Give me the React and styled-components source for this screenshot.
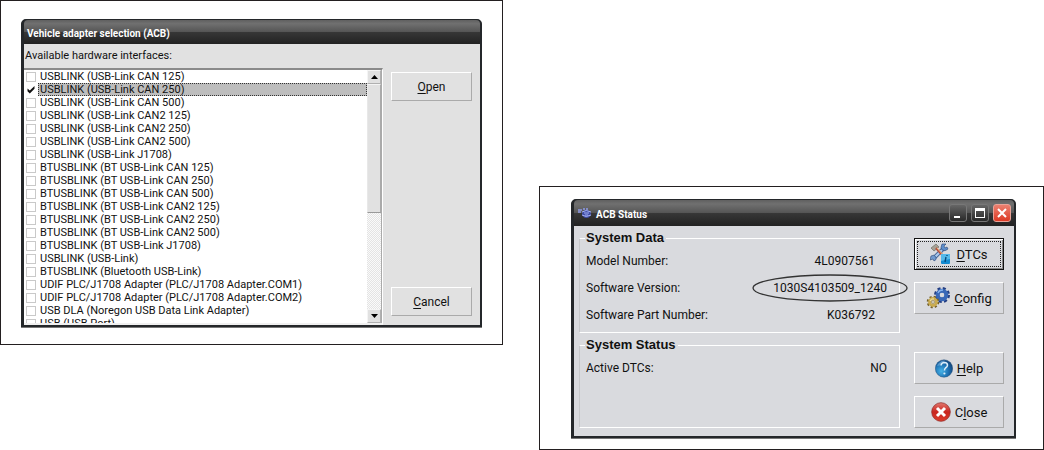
import { useRef, useState } from "react";
import styled, { createGlobalStyle } from "styled-components";

const INTERFACES = [
    "USBLINK (USB-Link CAN 125)",
    "USBLINK (USB-Link CAN 250)",
    "USBLINK (USB-Link CAN 500)",
    "USBLINK (USB-Link CAN2 125)",
    "USBLINK (USB-Link CAN2 250)",
    "USBLINK (USB-Link CAN2 500)",
    "USBLINK (USB-Link J1708)",
    "BTUSBLINK (BT USB-Link CAN 125)",
    "BTUSBLINK (BT USB-Link CAN 250)",
    "BTUSBLINK (BT USB-Link CAN 500)",
    "BTUSBLINK (BT USB-Link CAN2 125)",
    "BTUSBLINK (BT USB-Link CAN2 250)",
    "BTUSBLINK (BT USB-Link CAN2 500)",
    "BTUSBLINK (BT USB-Link J1708)",
    "USBLINK (USB-Link)",
    "BTUSBLINK (Bluetooth USB-Link)",
    "UDIF PLC/J1708 Adapter (PLC/J1708 Adapter.COM1)",
    "UDIF PLC/J1708 Adapter (PLC/J1708 Adapter.COM2)",
    "USB DLA (Noregon USB Data Link Adapter)",
    "USB (USB Port)",
]

const ROW_HEIGHT = 13

export default function App() {
    return (
        <>
            <GlobalStyle />
            <Page>
                <Figure $align="start" $padding="18px 20px 17px 20px">
                    <AdapterDialog />
                </Figure>
                <Figure $align="end" $padding="12px 27px 11px 31px">
                    <StatusDialog />
                </Figure>
            </Page>
        </>
    )
}

function AdapterDialog() {
    const [selected, setSelected] = useState(1)
    const listRef = useRef(null)

    function scroll(direction) {
        listRef.current.scrollBy(0, direction * ROW_HEIGHT)
    }

    return (
        <Dialog>
            <TitleBar $height={24}>
                <Title>Vehicle adapter selection (ACB)</Title>
            </TitleBar>
            <AdapterBody>
                <ListLabel id="interfaces">Available hardware interfaces:</ListLabel>
                <AdapterContent>
                    <ListBox>
                        <List ref={listRef} aria-labelledby="interfaces">
                            {INTERFACES.map((name, i) => (
                                <Row key={name}>
                                    <Check
                                        id={`interface-${i}`}
                                        type="checkbox"
                                        checked={selected === i}
                                        onChange={() => setSelected(i)}
                                    />
                                    <RowLabel htmlFor={`interface-${i}`} $selected={selected === i}>
                                        {name}
                                    </RowLabel>
                                </Row>
                            ))}
                        </List>
                        <ScrollBar>
                            <ScrollButton aria-label="Scroll up" onClick={() => scroll(-1)}>
                                <svg width="7" height="4" viewBox="0 0 7 4"><path d="M0 4L3.5 0L7 4Z" /></svg>
                            </ScrollButton>
                            <Thumb />
                            <Track />
                            <ScrollButton aria-label="Scroll down" onClick={() => scroll(1)}>
                                <svg width="7" height="4" viewBox="0 0 7 4"><path d="M0 0L3.5 4L7 0Z" /></svg>
                            </ScrollButton>
                        </ScrollBar>
                    </ListBox>
                    <AdapterButtons>
                        <Button $size={12}><span><u>O</u>pen</span></Button>
                        <Button $size={12}><span><u>C</u>ancel</span></Button>
                    </AdapterButtons>
                </AdapterContent>
            </AdapterBody>
        </Dialog>
    )
}

function StatusDialog() {
    return (
        <Dialog>
            <TitleBar $height={26}>
                <AppIcon />
                <Title>ACB Status</Title>
                <WindowButtons>
                    <WindowButton aria-label="Minimize">
                        <svg width="16" height="16" viewBox="0 0 16 16"><path d="M4 11h6v2H4z" fill="#fff" /></svg>
                    </WindowButton>
                    <WindowButton aria-label="Maximize">
                        <svg width="16" height="16" viewBox="0 0 16 16">
                            <path d="M3 3h10v10H3zM4 6v6h8V6z" fill="#fff" fillRule="evenodd" />
                        </svg>
                    </WindowButton>
                    <WindowButton aria-label="Close window" $close>
                        <svg width="16" height="16" viewBox="0 0 16 16">
                            <path d="M4 4l8 8M12 4l-8 8" stroke="#fff" strokeWidth="2" />
                        </svg>
                    </WindowButton>
                </WindowButtons>
            </TitleBar>
            <StatusBody>
                <Groups>
                    <Group>
                        <Legend>System Data</Legend>
                        <Fields>
                            <Field>
                                <dt>Model Number:</dt>
                                <Value $inset>4L0907561</Value>
                            </Field>
                            <Field>
                                <dt>Software Version:</dt>
                                <Value>
                                    1030S4103509_1240
                                    <Ring viewBox="0 0 156 28" aria-hidden="true">
                                        <ellipse cx="78" cy="14" rx="77" ry="13" />
                                    </Ring>
                                </Value>
                            </Field>
                            <Field>
                                <dt>Software Part Number:</dt>
                                <Value $inset>K036792</Value>
                            </Field>
                        </Fields>
                    </Group>
                    <Group $grow>
                        <Legend>System Status</Legend>
                        <Fields>
                            <Field>
                                <dt>Active DTCs:</dt>
                                <Value>NO</Value>
                            </Field>
                        </Fields>
                    </Group>
                </Groups>
                <StatusButtons>
                    <ButtonPair>
                        <Button $size={13} $focused><ToolsIcon /><span><u>D</u>TCs</span></Button>
                        <Button $size={13}><GearsIcon /><span><u>C</u>onfig</span></Button>
                    </ButtonPair>
                    <ButtonPair>
                        <Button $size={13}><HelpIcon /><span><u>H</u>elp</span></Button>
                        <Button $size={13}><CloseIcon /><span>C<u>l</u>ose</span></Button>
                    </ButtonPair>
                </StatusButtons>
            </StatusBody>
        </Dialog>
    )
}

function AppIcon() {
    return (
        <svg width="15" height="11" viewBox="0 0 15 11" aria-hidden="true">
            <path d="M1 2h4M1 4h3M6 1h2M9 1h2" stroke="#8f9be8" strokeWidth="1.4" />
            <ellipse cx="9.5" cy="6" rx="4.5" ry="4" fill="#3f4da6" />
            <path d="M5 4q4-3 9 0M5 7q4 3 9 0M7 5h5M8 7h3" stroke="#a3b0f5" fill="none" />
        </svg>
    )
}

function ToolsIcon() {
    return (
        <svg width="22" height="22" viewBox="0 0 22 22" aria-hidden="true">
            <path d="M4 15L14 5" stroke="#3e5f92" strokeWidth="4" />
            <path d="M4 15L14 5" stroke="#a9c8ec" strokeWidth="2.2" />
            <path d="M12 1q-2 4 0 6q3 2 6-1l-1-2-2 1-1-2 2-2z" fill="#5f8fcc" stroke="#2d4876" strokeWidth=".6" />
            <path d="M1 13q3-2 5 1q1 3-2 4l-1-2-3 1z" fill="#719bd0" stroke="#2d4876" strokeWidth=".6" />
            <path d="M1 5l5-4 3 3-5 4z" fill="#a5a195" stroke="#66645d" strokeWidth=".6" />
            <path d="M6 5l8 9" stroke="#b84d3b" strokeWidth="2.2" />
            <path d="M7 5l7 8" stroke="#edbd83" />
            <rect x="11" y="11" width="9" height="10" rx="1" fill="#148bd1" />
            <path d="M11 11h9v5l-9 2z" fill="#54b9ea" />
            <path d="M16 14l-1 5M17 12v1" stroke="#064b7d" strokeWidth="1.4" />
        </svg>
    )
}

function GearsIcon() {
    return (
        <svg width="24" height="22" viewBox="0 0 24 22" aria-hidden="true">
            <circle cx="16" cy="8" r="6.5" fill="none" stroke="#243f83" strokeWidth="3" strokeDasharray="2.9 2.2" />
            <circle cx="16" cy="8" r="4.3" fill="none" stroke="#3968b7" strokeWidth="4" />
            <path d="M12 6q1-3 5-3" fill="none" stroke="#88b4ee" strokeWidth="1.3" />
            <circle cx="16" cy="8" r="2" fill="#d9dade" />
            <circle cx="7" cy="15" r="5" fill="none" stroke="#74602b" strokeWidth="2.6" strokeDasharray="2 1.93" />
            <circle cx="7" cy="15" r="3.4" fill="none" stroke="#c9ab50" strokeWidth="3" />
            <path d="M4 14q1-3 4-2" fill="none" stroke="#f6e4a1" />
            <circle cx="7" cy="15" r="1.5" fill="#ded9c6" stroke="#74602b" strokeWidth=".5" />
        </svg>
    )
}

function HelpIcon() {
    return (
        <svg width="18" height="19" viewBox="0 0 18 19" aria-hidden="true">
            <defs>
                <radialGradient id="help" cx=".35" cy=".65" r=".7">
                    <stop offset="0" stopColor="#46b3e8" />
                    <stop offset=".6" stopColor="#1c6fb1" />
                    <stop offset="1" stopColor="#14457b" />
                </radialGradient>
            </defs>
            <circle cx="9" cy="9.5" r="8.7" fill="url(#help)" stroke="#2c567f" strokeWidth=".5" />
            <path d="M2 7q3-6 8-5.5q-3 5-8 5.5z" fill="#70a9d7" opacity=".7" />
            <path d="M6 6.500q.5-3 3.500-3q3 .2 3 2.700q0 1.500-2 2.800q-1 .8-1 2.500" fill="none" stroke="#dceefa" strokeWidth="1.500" />
            <circle cx="9.400" cy="14.500" r="1.100" fill="#dceefa" />
        </svg>
    )
}

function CloseIcon() {
    return (
        <svg width="20" height="20" viewBox="0 0 20 20" aria-hidden="true">
            <defs>
                <linearGradient id="close" x2="0" y2="1">
                    <stop offset="0" stopColor="#e2776d" />
                    <stop offset=".5" stopColor="#c9251f" />
                    <stop offset="1" stopColor="#dc3e2d" />
                </linearGradient>
            </defs>
            <circle cx="10" cy="10" r="9.3" fill="url(#close)" stroke="#95312e" strokeWidth=".8" />
            <path d="M6 6l8 8M14 6l-8 8" stroke="#fff" strokeWidth="3" />
        </svg>
    )
}

const GlobalStyle = createGlobalStyle`
    * {
        box-sizing: border-box;
    }
    body {
        margin: 0;
        background-color: #fff;
        color: #111;
        font-family: Roboto, "Liberation Sans", sans-serif;
    }
`
const Page = styled.main`
    min-height: 100vh;
    display: grid;
    grid-template-columns: 503fr 505fr;
    gap: 36px;
`
const Figure = styled.section`
    align-self: ${({ $align }) => $align};
    padding: ${({ $padding }) => $padding};
    border: 1px solid #231f20;
`
const Dialog = styled.div`
    border: 1px solid #24272a;
    border-width: 1px 2px 2px 3px;
    border-radius: 5px 5px 0 0;
    background-color: #24272a;
    box-shadow: 0 1px 0 #777;
`
const TitleBar = styled.header`
    height: ${({ $height }) => $height}px;
    padding: 0 3px;
    border-radius: 4px 4px 0 0;
    background: linear-gradient(#606060, #707070 15%, #565656 48%, #363636 52%, #222 100%);
    display: flex;
    align-items: center;
    gap: 4px;
`
const Title = styled.h1`
    margin: 0;
    padding-top: 2px;
    color: #fff;
    font-size: 10px;
    font-weight: 700;
`
const AdapterBody = styled.div`
    padding: 4px 8px 0 0;
    background-color: #e1e1e1;
`
const ListLabel = styled.h2`
    margin: 0;
    padding-left: 1px;
    font-size: 11px;
    line-height: 16px;
    font-weight: 400;
`
const AdapterContent = styled.div`
    padding-top: 4px;
    display: flex;
    gap: 8px;
`
const ListBox = styled.div`
    flex: 1;
    height: 257px;
    display: flex;
    background-color: #fff;
    border-top: 2px solid #8a8a8a;
    border-bottom: 2px solid #f0f0f0;
    border-right: 1px solid #fff;
`
const List = styled.ul`
    flex: 1;
    margin: 0;
    padding: 0 0 0 2px;
    list-style: none;
    overflow: hidden;
`
const Row = styled.li`
    height: ${ROW_HEIGHT}px;
    display: flex;
    align-items: center;
    gap: 2px;
`
const Check = styled.input`
    appearance: none;
    width: 10px;
    height: 10px;
    margin: 0;
    border: 1px solid #c9c9c9;
    background-color: #fff;
    &:checked {
        border-color: #111;
        background-color: #111;
        clip-path: polygon(15% 40%, 38% 60%, 85% 15%, 85% 42%, 38% 90%, 15% 68%);
    }
`
const RowLabel = styled.label`
    flex: 1;
    padding-left: 1px;
    border: 1px dotted ${({ $selected }) => $selected ? "#333" : "transparent"};
    background-color: ${({ $selected }) => $selected ? "#bdbdbd" : "transparent"};
    font-size: 11px;
    line-height: 11px;
    white-space: nowrap;
`
const ScrollBar = styled.div`
    width: 15px;
    display: flex;
    flex-direction: column;
    border-right: 1px solid #aaa;
`
const ScrollButton = styled.button`
    height: 14px;
    padding: 0;
    border: 1px solid;
    border-color: #f4f4f4 #b0b0b0 #b0b0b0 #f4f4f4;
    background-color: #e1e1e1;
    display: flex;
    align-items: center;
    justify-content: center;
`
const Thumb = styled.div`
    flex: 4;
    border: 1px solid;
    border-color: #f4f4f4 #aaa #999 #e8e8e8;
    background-color: #e1e1e1;
`
const Track = styled.div`
    flex: 3;
    background: repeating-conic-gradient(#e4e4e4 0 25%, #fafafa 0 50%) 0 0 / 2px 2px;
`
const AdapterButtons = styled.div`
    width: 81px;
    padding: 4px 0 9px;
    display: flex;
    flex-direction: column;
    justify-content: space-between;
    button {
        height: 29px;
    }
`
const Button = styled.button`
    height: 32px;
    padding: 0;
    border: 1px solid;
    border-color: ${({ $focused }) => $focused ? "#111" : "#fff #aaa #aaa #fff"};
    outline: ${({ $focused }) => $focused ? "1px dotted #222" : "none"};
    outline-offset: -4px;
    box-shadow: ${({ $focused }) => $focused ? "inset 1px 1px #fff, inset -1px -1px #888" : "none"};
    background-color: transparent;
    color: #111;
    font-family: inherit;
    font-size: ${({ $size }) => $size}px;
    display: flex;
    align-items: center;
    justify-content: center;
    gap: 4px;
    u {
        text-underline-offset: 2px;
    }
`
const WindowButtons = styled.div`
    margin-left: auto;
    display: flex;
    gap: 4px;
`
const WindowButton = styled.button`
    width: 18px;
    height: 18px;
    padding: 0;
    border: 1px solid ${({ $close }) => $close ? "#e9a297" : "#777"};
    border-radius: 3px;
    background: ${({ $close }) => $close
        ? "linear-gradient(#ec8070, #dd3a25)"
        : "linear-gradient(#666, #292929)"};
    display: flex;
    align-items: center;
    justify-content: center;
`
const StatusBody = styled.div`
    padding: 5px 10px 8px 5px;
    background-color: #d9dade;
    display: flex;
    gap: 14px;
`
const Groups = styled.div`
    flex: 1;
    display: flex;
    flex-direction: column;
    gap: 5px;
`
const Group = styled.fieldset`
    flex: ${({ $grow }) => $grow ? 1 : "none"};
    min-width: 0;
    min-height: 90px;
    margin: 0;
    padding: 2px 12px 4px 5px;
    border: 1px solid;
    border-color: #fff #fff #fff #c6c7ca;
`
const Legend = styled.legend`
    padding: 0 2px 0 1px;
    font-family: "Liberation Sans", sans-serif;
    font-size: 13px;
    line-height: 14px;
    font-weight: 700;
`
const Fields = styled.dl`
    margin: 0;
`
const Field = styled.div`
    height: 27px;
    padding-left: 1px;
    display: flex;
    align-items: center;
    justify-content: space-between;
    font-size: 12px;
`
const Value = styled.dd`
    position: relative;
    margin: 0;
    padding-right: ${({ $inset }) => $inset ? 12 : 0}px;
`
const Ring = styled.svg`
    position: absolute;
    width: 156px;
    height: 28px;
    top: 50%;
    left: 50%;
    transform: translate(-50%, -50%);
    fill: none;
    stroke: #333;
    stroke-width: 1.3;
`
const StatusButtons = styled.div`
    width: 90px;
    padding-top: 7px;
    display: flex;
    flex-direction: column;
    justify-content: space-between;
`
const ButtonPair = styled.div`
    display: flex;
    flex-direction: column;
    gap: 12px;
`
